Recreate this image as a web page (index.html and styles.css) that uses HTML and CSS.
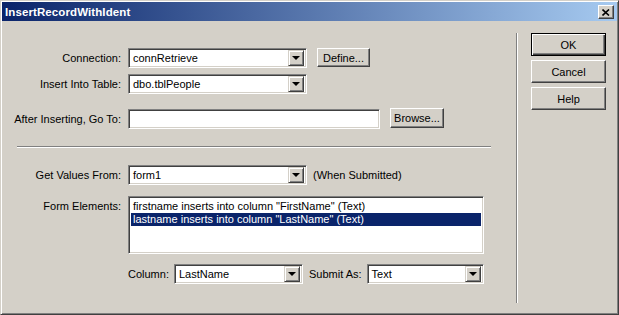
FILE: index.html
```html
<!DOCTYPE html>
<html lang="en">

<head>
    <meta charset="UTF-8">
    <title>InsertRecordWithIdent</title>
    <link rel="stylesheet" href="styles.css">
</head>

<body>
    <div class="window">
        <!-- Title bar -->
        <div class="titlebar">
            <span class="title">InsertRecordWithIdent</span>
            <div class="close">
                <svg width="8" height="7" viewBox="0 0 8 7">
                    <path d="M0.5 0.5 L7 6.5 M7 0.5 L0.5 6.5" stroke="#000" stroke-width="1.6" fill="none" />
                </svg>
            </div>
        </div>

        <div class="content">
            <div class="main">
                <div class="row row1">
                    <label>Connection:</label>
                    <div class="select w179"><span>connRetrieve</span><div class="arrow"></div></div>
                    <button class="btn define">Define...</button>
                </div>
                <div class="row row2">
                    <label>Insert Into Table:</label>
                    <div class="select w179"><span>dbo.tblPeople</span><div class="arrow"></div></div>
                </div>
                <div class="row row3">
                    <label>After Inserting, Go To:</label>
                    <div class="input"></div>
                    <button class="btn browse">Browse...</button>
                </div>

                <div class="hline"></div>

                <div class="row row4">
                    <label>Get Values From:</label>
                    <div class="select w179"><span>form1</span><div class="arrow"></div></div>
                    <span class="note">(When Submitted)</span>
                </div>
                <div class="row row5">
                    <label>Form Elements:</label>
                    <div class="listbox">
                        <div class="item">firstname inserts into column "FirstName" (Text)</div>
                        <div class="item selected">lastname inserts into column "LastName" (Text)</div>
                    </div>
                </div>
                <div class="row row6">
                    <span class="lbl-col">Column:</span>
                    <div class="select w129"><span>LastName</span><div class="arrow"></div></div>
                    <span class="lbl-submit">Submit As:</span>
                    <div class="select w117"><span>Text</span><div class="arrow"></div></div>
                </div>
            </div>

            <div class="vline"></div>

            <!-- Buttons on the right -->
            <div class="side">
                <button class="btn side-btn default">OK</button>
                <button class="btn side-btn">Cancel</button>
                <button class="btn side-btn">Help</button>
            </div>
        </div>
    </div>
</body>

</html>
```

FILE: styles.css
```css
* {
    box-sizing: border-box;
}

body {
    margin: 0;
    font-family: "Liberation Sans", Arial, sans-serif;
    font-size: 11px;
    color: #000;
}

.window {
    width: 619px;
    height: 315px;
    background-color: #d4d0c8;
    border: 1px solid;
    border-color: #d4d0c8 #404040 #404040 #d4d0c8;
    box-shadow: inset 1px 1px #fff, inset -1px -1px #808080;
    padding: 1px;
    display: flex;
    flex-direction: column;
}

.titlebar {
    height: 19px;
    background: linear-gradient(to right, #0a246a, #a6caf0);
    display: flex;
    align-items: center;
    justify-content: space-between;
    padding: 0 3px 0 3px;
}

.title {
    color: #fff;
    font-weight: bold;
    font-size: 11.5px;
    letter-spacing: 0.1px;
}

.close {
    width: 16px;
    height: 14px;
    background-color: #d4d0c8;
    border: 1px solid;
    border-color: #fff #404040 #404040 #fff;
    box-shadow: inset -1px -1px #808080;
    display: flex;
    align-items: center;
    justify-content: center;
    margin-top: 1px;
}

.content {
    display: flex;
    flex: 1;
}

.main {
    width: 514px;
}

.row {
    display: flex;
    align-items: center;
    height: 20px;
}

.row label {
    width: 119px;
    text-align: right;
    margin-right: 7px;
}

.row1 {
    margin-top: 27px;
}

.row2 {
    margin-top: 6px;
}

.row3 {
    margin-top: 15px;
}

.row4 {
    margin-top: 17px;
}

.row5 {
    margin-top: 11px;
    height: 58px;
    align-items: flex-start;
}

.row5 label {
    margin-top: 4px;
}

.row6 {
    margin-top: 10px;
    padding-left: 126px;
}

.select,
.input,
.listbox {
    background-color: #fff;
    border: 1px solid;
    border-color: #808080 #fff #fff #808080;
    box-shadow: inset 1px 1px #404040, inset -1px -1px #d4d0c8;
}

.select {
    height: 20px;
    display: flex;
    align-items: center;
    justify-content: space-between;
    padding: 0 2px 0 4px;
}

.w179 {
    width: 179px;
}

.w129 {
    width: 129px;
}

.w117 {
    width: 117px;
}

.arrow {
    width: 16px;
    height: 16px;
    background-color: #d4d0c8;
    border: 1px solid;
    border-color: #d4d0c8 #404040 #404040 #d4d0c8;
    box-shadow: inset 1px 1px #fff, inset -1px -1px #808080;
    position: relative;
}

.arrow::after {
    content: "";
    position: absolute;
    left: 3px;
    top: 5px;
    border-left: 4px solid transparent;
    border-right: 4px solid transparent;
    border-top: 4px solid #000;
}

.input {
    width: 252px;
    height: 20px;
}

.btn {
    font-family: "Liberation Sans", Arial, sans-serif;
    font-size: 11px;
    color: #000;
    background-color: #d4d0c8;
    border: 1px solid;
    border-color: #fff #404040 #404040 #fff;
    box-shadow: inset -1px -1px #808080;
    padding: 0;
}

.define {
    width: 53px;
    height: 19px;
    margin-left: 10px;
    margin-top: -1px;
}

.browse {
    width: 54px;
    height: 20px;
    margin-left: 10px;
    margin-top: -2px;
}

.hline {
    margin: 17px 0 0 15px;
    width: 474px;
    height: 2px;
    border-top: 1px solid #808080;
    border-bottom: 1px solid #fff;
}

.note {
    margin-left: 6px;
}

.listbox {
    width: 356px;
    height: 58px;
    padding: 3px 2px;
}

.item {
    height: 13px;
    line-height: 13px;
    padding-left: 2px;
}

.item.selected {
    background-color: #0a246a;
    color: #fff;
}

.lbl-col {
    margin-right: 5px;
}

.lbl-submit {
    margin: 0 5px 0 6px;
}

.vline {
    width: 2px;
    margin-top: 12px;
    height: 270px;
    border-left: 1px solid #808080;
    border-right: 1px solid #fff;
}

.side {
    display: flex;
    flex-direction: column;
    gap: 4px;
    padding-left: 13px;
    padding-top: 12px;
}

.side-btn {
    width: 75px;
    height: 23px;
}

.side-btn.default {
    border: 1px solid #000;
    box-shadow: inset 1px 1px #fff, inset -1px -1px #404040, inset -2px -2px #808080;
}
```
